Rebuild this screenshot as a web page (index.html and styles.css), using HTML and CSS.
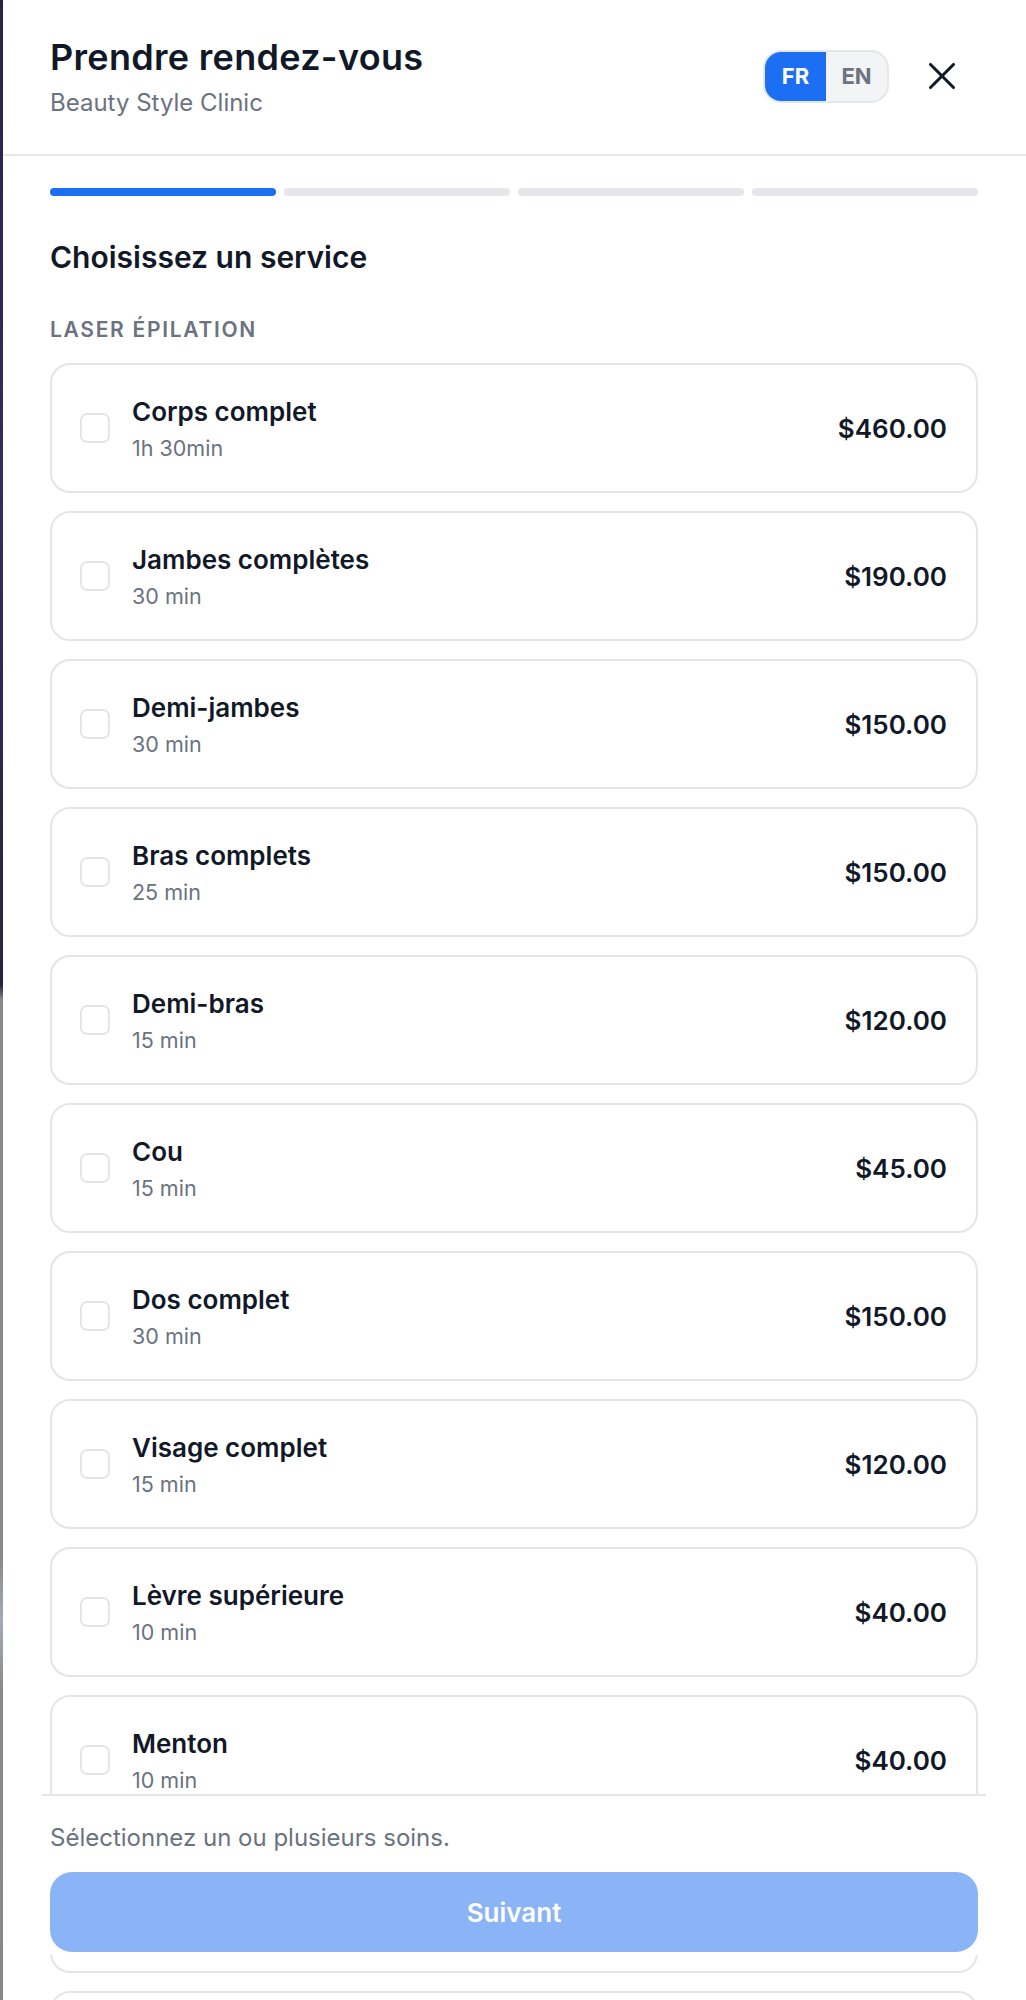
FILE: index.html
```html
<!DOCTYPE html>
<html lang="fr">
<head>
  <meta charset="UTF-8" />
  <meta name="viewport" content="width=device-width, initial-scale=1.0" />
  <title>Prendre rendez-vous</title>
  <link rel="stylesheet" href="styles.css">
</head>
<body>
  <div class="backdrop-edge"></div>

  <div class="modal">
    <header class="modal-header">
      <div class="heading">
        <h1>Prendre rendez-vous</h1>
        <p class="clinic">Beauty Style Clinic</p>
      </div>
      <div class="header-actions">
        <div class="lang-toggle">
          <button class="lang active">FR</button>
          <button class="lang">EN</button>
        </div>
        <button class="close-btn" aria-label="Fermer">
          <svg width="46" height="46" viewBox="0 0 24 24" fill="none" stroke="#111827" stroke-width="1.6" stroke-linecap="round" stroke-linejoin="round">
            <path d="M18 6 6 18" />
            <path d="m6 6 12 12" />
          </svg>
        </button>
      </div>
    </header>

    <div class="modal-body">
      <div class="steps">
        <span class="step current"></span>
        <span class="step"></span>
        <span class="step"></span>
        <span class="step"></span>
      </div>

      <h2>Choisissez un service</h2>
      <h3 class="category">Laser épilation</h3>

      <ul class="services">
        <li class="service-card">
          <span class="checkbox"></span>
          <div class="service-info">
            <div class="service-name">Corps complet</div>
            <div class="service-duration">1h 30min</div>
          </div>
          <div class="service-price">$460.00</div>
        </li>
        <li class="service-card">
          <span class="checkbox"></span>
          <div class="service-info">
            <div class="service-name">Jambes complètes</div>
            <div class="service-duration">30 min</div>
          </div>
          <div class="service-price">$190.00</div>
        </li>
        <li class="service-card">
          <span class="checkbox"></span>
          <div class="service-info">
            <div class="service-name">Demi-jambes</div>
            <div class="service-duration">30 min</div>
          </div>
          <div class="service-price">$150.00</div>
        </li>
        <li class="service-card">
          <span class="checkbox"></span>
          <div class="service-info">
            <div class="service-name">Bras complets</div>
            <div class="service-duration">25 min</div>
          </div>
          <div class="service-price">$150.00</div>
        </li>
        <li class="service-card">
          <span class="checkbox"></span>
          <div class="service-info">
            <div class="service-name">Demi-bras</div>
            <div class="service-duration">15 min</div>
          </div>
          <div class="service-price">$120.00</div>
        </li>
        <li class="service-card">
          <span class="checkbox"></span>
          <div class="service-info">
            <div class="service-name">Cou</div>
            <div class="service-duration">15 min</div>
          </div>
          <div class="service-price">$45.00</div>
        </li>
        <li class="service-card">
          <span class="checkbox"></span>
          <div class="service-info">
            <div class="service-name">Dos complet</div>
            <div class="service-duration">30 min</div>
          </div>
          <div class="service-price">$150.00</div>
        </li>
        <li class="service-card">
          <span class="checkbox"></span>
          <div class="service-info">
            <div class="service-name">Visage complet</div>
            <div class="service-duration">15 min</div>
          </div>
          <div class="service-price">$120.00</div>
        </li>
        <li class="service-card">
          <span class="checkbox"></span>
          <div class="service-info">
            <div class="service-name">Lèvre supérieure</div>
            <div class="service-duration">10 min</div>
          </div>
          <div class="service-price">$40.00</div>
        </li>
        <li class="service-card">
          <span class="checkbox"></span>
          <div class="service-info">
            <div class="service-name">Menton</div>
            <div class="service-duration">10 min</div>
          </div>
          <div class="service-price">$40.00</div>
        </li>
        <li class="service-card">
          <span class="checkbox"></span>
          <div class="service-info">
            <div class="service-name">Aisselles</div>
            <div class="service-duration">10 min</div>
          </div>
          <div class="service-price">$40.00</div>
        </li>
        <li class="service-card"></li>
      </ul>
    </div>

    <footer class="modal-footer">
      <p class="hint">Sélectionnez un ou plusieurs soins.</p>
      <button class="next-btn" disabled>Suivant</button>
    </footer>
  </div>
</body>
</html>
```

FILE: styles.css
```css
body {
  margin: 0;
  display: flex;
  height: 2000px;
  overflow: hidden;
  background: #fff;
  font-family: Inter, "Noto Sans", Arial, sans-serif;
  color: #111827;
}
.backdrop-edge {
  width: 3px;
  flex-shrink: 0;
  background: linear-gradient(#24244a 0, #382b62 500px, #2a2142 985px, #8a8a8a 1000px, #8a8a8a 1560px, #a3abb8 1620px, #8a8a8a 1690px, #888 2000px);
}
.modal {
  position: relative;
  flex: 1;
  height: 2000px;
  overflow: hidden;
  background: #fff;
}
.modal-header {
  display: flex;
  align-items: center;
  justify-content: space-between;
  padding: 35px 61px 37px 47px;
  border-bottom: 2px solid #e7e7e7;
}
h1 {
  margin: 0;
  font-size: 36px;
  line-height: 44px;
  font-weight: 600;
  letter-spacing: 0.3px;
}
.clinic {
  margin: 10px 0 0;
  font-size: 24px;
  line-height: 28px;
  color: #6b7280;
}
.header-actions {
  display: flex;
  align-items: center;
  gap: 30px;
}
.lang-toggle {
  display: flex;
  border: 2px solid #e5e7eb;
  border-radius: 18px;
  overflow: hidden;
  background: #f3f4f6;
}
.lang {
  width: 61px;
  height: 49px;
  border: none;
  background: transparent;
  font-family: inherit;
  font-size: 22px;
  font-weight: 700;
  color: #6b7280;
  padding: 0;
}
.lang.active {
  background: #1c6ef2;
  color: #fff;
}
.close-btn {
  display: flex;
  border: none;
  background: none;
  padding: 0;
}
.modal-body {
  padding: 32px 48px 0 47px;
}
.steps {
  display: grid;
  grid-template-columns: repeat(4, 1fr);
  gap: 8px;
}
.step {
  height: 8px;
  border-radius: 4px;
  background: #e5e7eb;
}
.step.current {
  background: #1c6ef2;
}
h2 {
  margin: 41px 0 0;
  font-size: 30px;
  line-height: 40px;
  font-weight: 600;
}
.category {
  margin: 39px 0 0;
  font-size: 21px;
  line-height: 28px;
  font-weight: 600;
  letter-spacing: 1.7px;
  text-transform: uppercase;
  color: #6b7280;
}
.services {
  list-style: none;
  margin: 19px 0 0;
  padding: 0;
  display: flex;
  flex-direction: column;
  gap: 18px;
}
.service-card {
  display: flex;
  align-items: center;
  box-sizing: border-box;
  height: 130px;
  flex-shrink: 0;
  padding: 0 29px 0 28px;
  border: 2px solid #e7e5e4;
  border-radius: 20px;
}
.checkbox {
  width: 30px;
  height: 30px;
  box-sizing: border-box;
  border: 2px solid #e7e5e4;
  border-radius: 7px;
  flex-shrink: 0;
}
.service-info {
  flex: 1;
  margin-left: 22px;
}
.service-name {
  font-size: 26px;
  line-height: 36px;
  font-weight: 600;
}
.service-duration {
  margin-top: 4px;
  font-size: 21.5px;
  line-height: 28px;
  color: #6b7280;
}
.service-price {
  font-size: 26px;
  font-weight: 600;
}
.modal-footer {
  position: absolute;
  left: 39px;
  right: 40px;
  bottom: 45px;
  padding: 26px 8px 3px;
  border-top: 2px solid #e7e5e4;
  background: #fff;
}
.hint {
  margin: 0;
  font-size: 24px;
  line-height: 32px;
  color: #6b7280;
}
.next-btn {
  display: block;
  width: 100%;
  height: 80px;
  margin-top: 18px;
  border: none;
  border-radius: 22px;
  background: #8bb4f7;
  color: #fff;
  font-family: inherit;
  font-size: 26px;
  font-weight: 600;
}
```
